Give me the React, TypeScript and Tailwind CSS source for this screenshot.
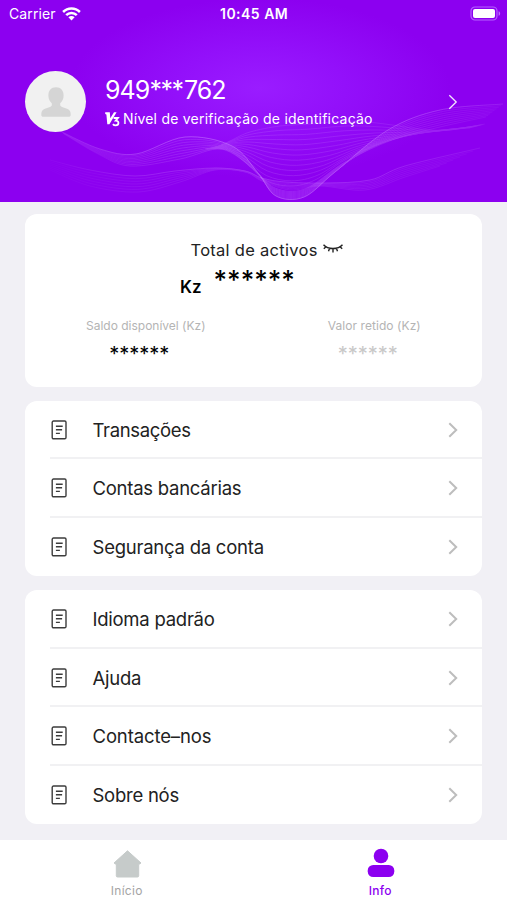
import React from "react";

type Point = [number, number];

const crest: Point[] = [[62, 132], [100, 149], [136, 154], [185, 137], [232, 146], [258, 173], [276, 196], [304, 197], [335, 172], [388, 130], [440, 110], [503, 104]];
const trough: Point[] = [[64, 134], [98, 154], [130, 166], [180, 159], [222, 149], [252, 168], [275, 188], [305, 189], [345, 162], [392, 140], [440, 127], [486, 117]];
const high: Point[] = [[218, 147], [232, 140], [250, 132], [280, 126], [310, 124], [350, 121], [385, 124], [420, 129], [450, 130], [485, 124]];
const sag: Point[] = [[205, 149], [225, 150], [245, 162], [265, 180], [290, 186], [315, 180], [345, 160], [385, 142], [425, 132], [470, 128]];
const base: Point[] = [[50, 160], [90, 170], [135, 176], [175, 171], [215, 168], [245, 171], [262, 178], [285, 182], [325, 183], [370, 180], [405, 166], [480, 148]];
const floor: Point[] = [[50, 170], [90, 186], [138, 192], [180, 182], [215, 170], [245, 172], [262, 181], [290, 190], [320, 186], [365, 190], [405, 177], [440, 166]];

function curve(points: Point[]): string {
  let d = `M${points[0][0]} ${points[0][1]}`;
  for (let i = 0; i < points.length - 1; i++) {
    const a = points[Math.max(i - 1, 0)];
    const b = points[i];
    const c = points[i + 1];
    const e = points[Math.min(i + 2, points.length - 1)];
    d += `C${b[0] + (c[0] - a[0]) / 6} ${b[1] + (c[1] - a[1]) / 6} ${c[0] - (e[0] - b[0]) / 6} ${c[1] - (e[1] - b[1]) / 6} ${c[0]} ${c[1]}`;
  }
  return d;
}

function between(from: Point[], to: Point[], count: number): string[] {
  return Array.from({ length: count }, (_, n) => {
    const t = n / (count - 1);
    return curve(from.map((p, i): Point => [p[0] + (to[i][0] - p[0]) * t, p[1] + (to[i][1] - p[1]) * t]));
  });
}

function Waves() {
  return (
    <svg className="absolute inset-0" width="507" height="202" viewBox="0 0 507 202" fill="none" aria-hidden="true">
      <defs>
        <linearGradient id="fade" gradientUnits="userSpaceOnUse" x1="40" y1="0" x2="507" y2="0">
          <stop offset="0" stopColor="#d08bff" stopOpacity="0.1" />
          <stop offset="0.2" stopColor="#d08bff" stopOpacity="0.7" />
          <stop offset="0.45" stopColor="#d08bff" stopOpacity="1" />
          <stop offset="0.7" stopColor="#d08bff" stopOpacity="0.9" />
          <stop offset="1" stopColor="#d08bff" stopOpacity="0.3" />
        </linearGradient>
      </defs>
      <g stroke="url(#fade)" strokeWidth="0.8">
        <g opacity="0.3">{between(crest, trough, 9).map((d) => <path key={d} d={d} />)}</g>
        <g opacity="0.24">{between(high, sag, 13).map((d) => <path key={d} d={d} />)}</g>
        <g opacity="0.18">{between(base, floor, 7).map((d) => <path key={d} d={d} />)}</g>
        <path d={curve(crest)} opacity="0.45" />
        <path d={curve(base)} opacity="0.22" />
      </g>
    </svg>
  );
}

function Chevron({ className, weight }: { className: string; weight: number }) {
  return (
    <svg className={className} width="10" height="16" viewBox="0 0 10 16" fill="none" stroke="currentColor" strokeWidth={weight} aria-hidden="true">
      <path d="M1.3 1.3 8.2 8l-6.9 6.7" />
    </svg>
  );
}

function DocIcon() {
  return (
    <svg className="shrink-0" width="16" height="20" viewBox="0 0 16 20" fill="none" stroke="#3c3c3c" strokeWidth="1.4" aria-hidden="true">
      <rect x="1.2" y="1" width="13.8" height="17.8" rx="1.3" />
      <path d="M4.9 6.3h6.8M4.9 9.8h6.2M4.9 13.4h4" />
    </svg>
  );
}

function Row({ label, spacing, last }: { label: string; spacing: string; last?: boolean }) {
  return (
    <div className={`ml-[25px] flex items-center pr-6 pl-px ${last ? "pt-px" : "border-b-2 border-[#f1f1f3] pt-[2px]"}`}>
      <DocIcon />
      <span className={`ml-[25.5px] text-[18.5px] leading-6 text-[#222] ${spacing}`}>{label}</span>
      <Chevron className="ml-auto text-[#bdbdbd]" weight={2} />
    </div>
  );
}

function StatusBar() {
  return (
    <div className="relative flex h-[27px] items-center justify-between pr-[6px] pl-[9px]">
      <div className="flex items-center gap-[6px]">
        <span className="text-[14px] tracking-[0.12px]">Carrier</span>
        <svg width="19" height="14" viewBox="0 0 19 14" fill="none" stroke="white" strokeWidth="2.5" aria-hidden="true">
          <path d="M1.1 5C5.7.4 13.3.4 17.9 5M4.2 8.2c2.9-2.9 7.7-2.9 10.6 0" />
          <path d="M6.4 10.3c1.7-1.7 4.5-1.7 6.2 0l-3.1 3.2Z" fill="white" stroke="none" />
        </svg>
      </div>
      <span className="absolute left-[220px] text-[14px] font-semibold tracking-[0.48px]">10:45 AM</span>
      <svg width="31" height="15" viewBox="0 0 31 15" fill="none" aria-hidden="true">
        <rect x="1" y="1" width="26" height="13" rx="4" stroke="#b560ff" strokeWidth="1.2" />
        <rect x="3" y="3" width="22" height="9" rx="2" fill="white" />
        <path d="M28.6 5.2c2 .7 2 3.9 0 4.6Z" fill="#bd70ff" />
      </svg>
    </div>
  );
}

export default function App() {
  return (
    <div className="flex h-[900px] w-[507px] flex-col overflow-hidden bg-[#f1f0f5] font-['Inter','Liberation_Sans',sans-serif]">
      <header className="relative h-[202px] shrink-0 bg-[#8c00f0] bg-[radial-gradient(ellipse_190px_90px_at_260px_88px,#9a1cff_0%,#9310fa_45%,#8c00f0_100%)] text-white">
        <Waves />
        <StatusBar />
        <div className="relative flex items-start pt-[44px] pr-[49px] pl-[25px]">
          <div className="flex size-[61px] shrink-0 items-center justify-center rounded-full bg-[#f1f1f1]">
            <svg width="30" height="30" viewBox="0 0 30 30" fill="#d5d5d5" aria-hidden="true">
              <path d="M15 .3c4.8 0 7.6 3.3 7.6 8.2 0 3.5-1.4 6.2-3.4 7.7v2.2c1.2 1.8 5 2.3 7.5 3.5 2.3 1.1 3 2.8 3 5.8 0 1.4-.7 2-2 2H2.3c-1.3 0-2-.6-2-2 0-3 .7-4.7 3-5.8 2.5-1.2 6.3-1.7 7.5-3.5v-2.2c-2-1.5-3.4-4.2-3.4-7.7C7.4 3.6 10.2.3 15 .3Z" />
            </svg>
          </div>
          <div className="ml-[19px] flex flex-col pt-[4px]">
            <span className="text-[25px] leading-[30px]">
              <span className="tracking-[-0.9px]">949</span>
              <span className="tracking-[-1.5px]">***</span>
              <span className="ml-[1.5px] tracking-[-1px]">762</span>
            </span>
            <div className="mt-[4px] flex items-center gap-[3px] leading-[20px]">
              <svg width="15" height="16" viewBox="0 0 15 16" fill="none" stroke="white" aria-hidden="true">
                <path d="M.2 1.2h4.6l.5 6L9 1.2h2.6L4.4 13.2H2.3L1.4 3.4.2 2.9Z" fill="white" stroke="none" />
                <path d="M8.6 7h4.3l-2.2 2.7c3.8.1 3.5 4.7 0 4.7-1.3 0-2.200-.5-2.800-1.300" strokeWidth="1.8" />
              </svg>
              <span className="text-[14px] tracking-[0.23px]">Nível de verificação de identificação</span>
            </div>
          </div>
          <Chevron className="mt-[23px] ml-auto text-white/90" weight={1.3} />
        </div>
      </header>

      <main className="flex flex-1 flex-col px-[25px] pt-3">
        <section className="flex h-[173px] flex-col rounded-xl bg-white">
          <div className="mt-[24px] flex items-center pl-[165.5px] leading-6">
            <span className="text-[16.5px] tracking-[0.28px] text-[#222]">Total de activos</span>
            <svg className="mb-[3px] ml-[5px]" width="20" height="9" viewBox="0 0 20 9" fill="none" stroke="#222" strokeWidth="1.4" aria-hidden="true">
              <path d="M.5.8c4.5 5 14.5 5 19 0M3 2.8.8 4.8M6.7 4 5.5 7.3M10 4.4v4M13.3 4l1.2 3.3M17 2.8l2.2 2" />
            </svg>
          </div>
          <div className="flex h-[32px] items-start pl-[155px] text-black">
            <span className="mt-[13px] text-[17px] leading-6 font-semibold">Kz</span>
            <span className="mt-px ml-[12px] text-[26px] leading-[34px] font-medium">******</span>
          </div>
          <div className="mt-[24px] grid grid-cols-2 text-center">
            <div>
              <p className="pl-[13px] text-[12px] leading-4 text-[#b4b4b4]">Saldo disponível (Kz)</p>
              <p className="mt-[8px] text-[20px] leading-6 text-black">******</p>
            </div>
            <div>
              <p className="pl-[13px] text-[12px] leading-4 tracking-[0.07px] text-[#b4b4b4]">Valor retido (Kz)</p>
              <p className="mt-[8px] text-[20px] leading-6 text-[#c8c8c8]">******</p>
            </div>
          </div>
        </section>

        <section className="mt-[14px] grid h-[175px] auto-rows-fr rounded-xl bg-white">
          <Row label="Transações" spacing="tracking-[-0.35px]" />
          <Row label="Contas bancárias" spacing="tracking-[-0.25px]" />
          <Row label="Segurança da conta" spacing="tracking-[-0.24px]" last />
        </section>

        <section className="mt-[14px] grid h-[234px] auto-rows-fr rounded-xl bg-white">
          <Row label="Idioma padrão" spacing="tracking-[-0.25px]" />
          <Row label="Ajuda" spacing="tracking-[-0.25px]" />
          <Row label="Contacte–nos" spacing="tracking-[-0.12px]" />
          <Row label="Sobre nós" spacing="tracking-[-0.25px]" last />
        </section>
      </main>

      <nav className="grid h-[60px] shrink-0 grid-cols-2 bg-white text-center text-[12px] leading-4">
        <div className="flex flex-col items-center pt-[10px] text-[#a4a4a4]">
          <svg className="ml-px" width="29" height="28" viewBox="0 0 29 28" fill="#c6cbca" stroke="#c6cbca" strokeWidth="1" strokeLinejoin="round" aria-hidden="true">
            <path d="M14.5.8 28 13l-2.3 1.5v11.3q0 1.2-1.2 1.2h-20q-1.2 0-1.2-1.2V14.5L1 13Z" />
          </svg>
          <span className="mt-[5px] tracking-[0.3px]">Início</span>
        </div>
        <div className="flex flex-col items-center pt-[8px] pl-[2px] font-medium text-[#8c00f0]">
          <svg width="28" height="30" viewBox="0 0 28 30" fill="currentColor" aria-hidden="true">
            <circle cx="14" cy="8" r="7.3" />
            <rect x=".7" y="17" width="26.6" height="12" rx="5.5" />
          </svg>
          <span className="mt-[5px] mr-[2px] tracking-[0.2px]">Info</span>
        </div>
      </nav>
    </div>
  );
}
